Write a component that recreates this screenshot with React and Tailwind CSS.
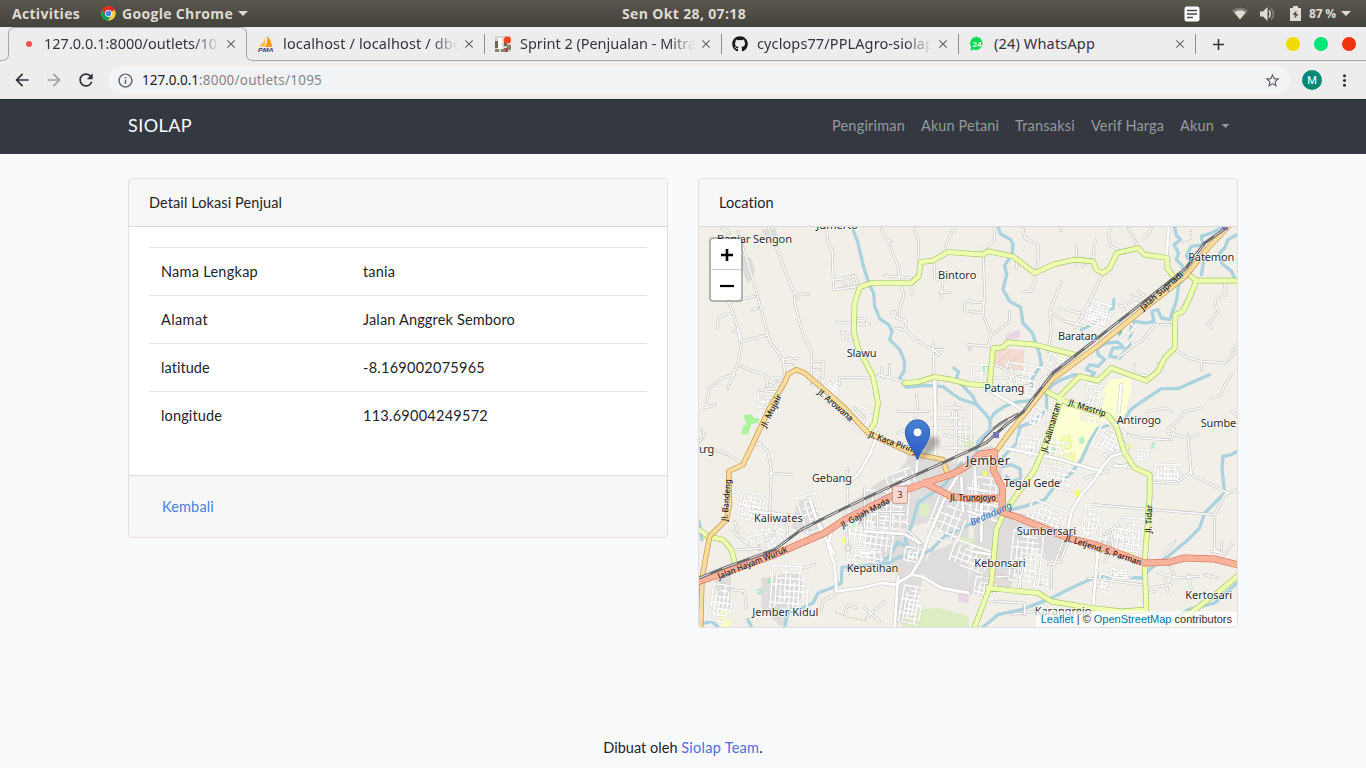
import { useLayoutEffect, useRef } from "react";
import { MdArrowBack, MdArrowForward, MdRefresh, MdInfoOutline, MdStarBorder, MdMoreVert, MdAdd, MdClose } from "react-icons/md";
import { FaGithub } from "react-icons/fa";

/* Inline text whose letter spacing is tuned so that it spans w pixels. */
function Fit({ w, children, className = "" }) {
  const ref = useRef(null);
  useLayoutEffect(() => {
    const el = ref.current;
    el.style.letterSpacing = "0px";
    const natural = el.getBoundingClientRect().width;
    const n = el.textContent.length;
    el.style.letterSpacing = `${(w - natural) / n}px`;
  }, [w, children]);
  return (
    <span ref={ref} className={`inline-block whitespace-pre ${className}`}>
      {children}
    </span>
  );
}

/* ---------- desktop top bar ---------- */
function ChromeLogo() {
  return (
    <svg className="h-[15px] w-[15px]" viewBox="0 0 48 48">
      <circle cx="24" cy="24" r="23" fill="#fdd043" />
      <path d="M24 24 L4 12.5 A23 23 0 0 1 44 12.5 Z" fill="#dd2c1e" />
      <path d="M24 24 L4 12.5 A23 23 0 0 0 22 47 L33 29 Z" fill="#109d58" />
      <path d="M24 13 H44.5 A23 23 0 0 0 4 12.5 L14 28 Z" fill="#dd2c1e" />
      <circle cx="24" cy="24" r="11" fill="#fff" />
      <circle cx="24" cy="24" r="8.8" fill="#4285f4" />
    </svg>
  );
}

function Caret({ className }) {
  return (
    <svg className={className} viewBox="0 0 10 5">
      <path d="M0 0H10L5 5Z" fill="currentColor" />
    </svg>
  );
}

function TopBar() {
  return (
    <div className="relative flex h-[27px] items-center bg-linear-to-b from-[#5a574e] to-[#43423c] pr-[15px] pl-3 font-['Open_Sans',sans-serif] text-[14px] font-bold text-[#dfdbd2]">
      <Fit w={68}>Activities</Fit>
      <div className="ml-[21px]"><ChromeLogo /></div>
      <Fit w={111} className="ml-[6px]">Google Chrome</Fit>
      <Caret className="ml-[5px] h-[5px] w-[10px]" />
      <div className="absolute inset-x-0 flex justify-center pb-px pl-[2px]"><Fit w={124}>Sen Okt 28, 07:18</Fit></div>
      <div className="ml-auto flex items-center">
        <svg className="h-4 w-4" viewBox="0 0 16 16">
          <rect x=".5" y=".5" width="15" height="15" rx="2.5" fill="#fff" />
          <path d="M3 4.5h10M3 8h10M3 11.5h6" stroke="#4b4942" strokeWidth="1.7" />
        </svg>
        <svg className="ml-[32px] h-[13px] w-4" viewBox="0 0 16 13">
          <path d="M0 3.5Q8-2.500 16 3.500L8 12.500Z" fill="#7d7b73" />
          <path d="M2.300 5.500Q8 1 13.700 5.500L8 12.500Z" fill="#dfdbd2" />
        </svg>
        <svg className="ml-[12px] h-[14px] w-[16px]" viewBox="0 0 16 14">
          <path d="M0 4.500H3L7.500 0V14L3 9.500H0Z" fill="#dfdbd2" />
          <path d="M9 3.500Q11.500 7 9 10.500" stroke="#dfdbd2" strokeWidth="1.500" fill="none" />
          <path d="M11 1.500Q16 7 11 12.500" stroke="#85837b" strokeWidth="1.500" fill="none" />
        </svg>
        <svg className="ml-[14px] h-[15px] w-[11px]" viewBox="0 0 11 15">
          <path d="M3 0H8V2H11V15H0V2H3Z" fill="#dfdbd2" />
          <path d="M6.500 4.500L2.500 9H5L4.500 12.500L8.500 8H6Z" fill="#4b4942" />
        </svg>
        <Fit w={27} className="ml-[8px] text-[12px]">87 %</Fit>
        <Caret className="ml-[5px] h-[5px] w-[10px]" />
      </div>
    </div>
  );
}

/* ---------- browser ---------- */
function PmaIcon() {
  return (
    <svg className="h-4 w-4" viewBox="0 0 16 16">
      <path d="M6 1Q7 6 2 11Q5 10 6.500 10.500Q8 6 6 1Z" fill="#f7b64a" />
      <path d="M9 0Q10 6 7 11H14Q14 5 9 0Z" fill="#f89c0e" />
      <path d="M1 11L4 6L4 11Z" fill="#f9c671" />
      <text x="0" y="15.600" textLength="15.500" lengthAdjust="spacingAndGlyphs" className="font-['Liberation_Sans',sans-serif] text-[5.500px] font-bold italic" fill="#3c3a78">PMA</text>
    </svg>
  );
}

function BoardIcon() {
  return (
    <svg className="h-4 w-4" viewBox="0 0 16 16">
      <rect width="16" height="16" fill="#d9d5cc" />
      <path d="M0 5h3v7H0zM9 6h3v4H9z" fill="#6f6a58" />
      <path d="M0 13h4v3H0zM6 12h4v4H6zM12 9h4v5h-4z" fill="#8b8468" />
      <path d="M10 12h3v4h-3z" fill="#c33a55" />
      <path d="M3 2h4v8l2 3H3z" fill="#fff" />
      <circle cx="12.300" cy="4" r="3.500" fill="#fb4223" />
    </svg>
  );
}

function WhatsAppIcon() {
  return (
    <svg className="h-4 w-4" viewBox="0 0 16 16">
      <path d="M8 .5A7 7 0 1 1 4.500 14L.8 15.200L2 11.500A7 7 0 0 1 8 .5Z" fill="#06d755" stroke="#fff" strokeWidth=".6" />
      <text x="8" y="10.800" textAnchor="middle" className="font-['Liberation_Sans',sans-serif] text-[8px] font-bold" fill="#fff">24</text>
    </svg>
  );
}

function Tab({ icon, title, w, fade = true, active = false }) {
  return (
    <div className="relative flex h-full w-[237px] shrink-0 items-center pl-[10px]">
      <div className="flex h-4 w-4 items-center justify-center">{icon}</div>
      <div className={`overflow-hidden pb-px ${active ? "ml-[7px] w-[176px]" : "ml-[9px] w-[175px]"} ${fade ? "mask-r-from-85% mask-r-to-100%" : ""}`}>
        <Fit w={w}>{title}</Fit>
      </div>
      <MdClose className="ml-[4px] h-[14px] w-[14px] text-[#5f6368]" />
      {!active && <div className="absolute top-[7px] right-0 h-5 w-px bg-[#8f8f8f]" />}
    </div>
  );
}

function TabStrip() {
  return (
    <div className="relative flex h-[34px] items-center bg-[#ededed] pl-[11px] font-['Noto_Sans',sans-serif] text-[14.500px] text-[#33343f]">
      <svg className="absolute inset-0 h-[34px] w-[1366px]" viewBox="0 0 1366 34">
        <path d="M0 33.500H2Q8.500 33.500 8.500 27V7Q8.500 .5 15 .5H240.500Q246.500 .5 246.500 7V27Q246.500 33.500 253 33.500H1366" fill="none" stroke="#a3a3a3" />
      </svg>
      <Tab icon={<div className="h-[6px] w-[6px] rounded-full bg-[#ff4d4d]" />} title="127.0.0.1:8000/outlets/10" w={173} active />
      <Tab icon={<PmaIcon />} title="localhost / localhost / dbc" w={177} />
      <Tab icon={<BoardIcon />} title="Sprint 2 (Penjualan - Mitra" w={176} />
      <Tab icon={<FaGithub className="h-4 w-4 text-[#16181c]" />} title="cyclops77/PPLAgro-siolap" w={177} />
      <Tab icon={<WhatsAppIcon />} title="(24) WhatsApp" w={101} fade={false} />
      <MdAdd className="ml-[13px] h-[19px] w-[19px] text-[#2e3436]" />
      <div className="ml-auto flex gap-[14px] pr-[10px]">
        <div className="h-[14px] w-[14px] rounded-full bg-[#f0dc00]" />
        <div className="h-[14px] w-[14px] rounded-full bg-[#00e676]" />
        <div className="h-[14px] w-[14px] rounded-full bg-[#f0330a]" />
      </div>
    </div>
  );
}

function Toolbar() {
  return (
    <div className="flex h-[38px] items-center bg-[#ededed] pl-[12px] font-['Noto_Sans',sans-serif] text-[13.500px]">
      <MdArrowBack className="h-5 w-5 text-[#2e3138]" />
      <MdArrowForward className="ml-3 h-5 w-5 text-[#a0a0a3]" />
      <MdRefresh className="ml-3 h-5 w-5 text-[#2e3138]" />
      <div className="ml-[12px] flex h-7 w-[1182px] items-center rounded-full bg-[#f1f3f4] pr-[9px] pl-[9px]">
        <MdInfoOutline className="h-[17px] w-[17px] text-[#5f6368]" />
        <Fit w={57} className="ml-2 text-[#202124]">127.0.0.1</Fit>
        <Fit w={123} className="text-[#85878c]">:8000/outlets/1095</Fit>
        <MdStarBorder className="ml-auto h-[17px] w-[17px] text-[#5f6368]" />
      </div>
      <div className="ml-[12px] flex h-5 w-5 items-center justify-center rounded-full bg-[#00897b] font-['Roboto',sans-serif] text-[11px] text-white">M</div>
      <MdMoreVert className="ml-[13px] h-[19px] w-[19px] text-[#33353b]" />
    </div>
  );
}

/* ---------- map: drawing units are a third of a pixel ---------- */
const rivers = [
  "M462 147L480 195L495 260L512 315L527 345L530 385L545 422L572 440L582 460L575 485L605 515L620 550L618 580L605 600L625 628L680 622L735 626L760 645L786 663L815 672L836 680L860 705L876 725L876 755L840 790L835 820",
  "M768 570L782 582L775 600L800 630L825 655L836 680",
  "M900 147L908 168L938 185L945 200L942 230L920 262L926 290L915 335L935 370L968 388L975 435L1003 465L1015 500L1025 530L1030 560L1010 590L1000 610L1005 635",
  "M1000 668L955 672L920 685L890 705L876 725",
  "M1430 147L1435 172L1448 185L1428 200L1442 225L1435 245L1452 262L1460 300L1442 320L1435 370L1415 425L1390 420L1380 395L1362 400L1368 430L1345 435L1310 430L1300 445L1295 500L1265 540L1235 535L1245 510L1275 508L1262 492L1225 495L1198 510L1200 530L1220 545L1200 565L1175 560L1165 575L1190 585L1175 600L1130 590L1090 605L1065 620L1045 640L1046 696L1010 730L966 746L956 796L916 836",
  "M1570 150L1540 165L1510 175L1515 200L1480 205L1465 232L1480 255L1450 290",
  "M1617 170L1590 185L1580 210L1565 225L1570 255L1600 280L1610 300",
  "M1480 240L1520 230L1510 290M1248 365L1245 390L1220 410L1200 430L1150 455",
  "M1535 590L1500 605L1440 632L1390 632L1355 655L1325 675L1298 695L1280 725L1245 738L1200 750L1175 790L1150 845L1120 885L1070 925L1040 965L980 985L940 995L870 1015L810 1042L740 1075L700 1115L660 1135L610 1135L570 1155L480 1165L432 1168L430 1215L400 1230L360 1245L345 1275L300 1295L270 1300L260 1347",
  "M790 855L770 880L740 920L696 950L660 975L640 1045L622 1085L630 1110L600 1092L570 1140L540 1150",
  "M1617 820L1600 830L1575 835L1572 875L1580 945L1550 975L1520 1005L1505 1050L1465 1090L1410 1135L1360 1170L1330 1200L1200 1195L1140 1220L1050 1265L970 1295L900 1310L855 1347",
  "M1617 1215L1550 1275L1470 1295L1420 1330",
  "M916 866L940 860L966 872L968 900L940 912L925 895",
  "M3 1030L12 1085M3 1340L40 1330L60 1347M150 1325L160 1347",
];

const minor = [
  "M210 147L240 220L265 290L290 345L290 375L315 470L340 520L340 590M288 345L332 350M300 352L300 362",
  "M386 155L390 195L402 215L407 335L485 325M407 307L470 293L480 320M430 303L445 322M455 297L462 318",
  "M70 150L95 165M120 160L175 340L215 490L255 545L262 600M92 372L170 355M92 372L105 405L132 490L118 560L90 630M132 490L210 470M57 450L62 418L100 405M107 460L120 455L125 490M118 560L155 575L205 595L208 620M25 675L35 630L70 600L110 590",
  "M550 155L575 200L600 265L605 310L618 350L605 390L605 420M650 150L662 190L662 250M770 147L745 195L740 225M560 293L640 300M642 320L642 350M570 185L580 190M708 248L710 300L735 310L730 360M725 343L755 343",
  "M415 432L515 440M480 420L505 423L508 440M430 462L465 468M435 465L435 480L460 487M580 405L590 400L595 420L625 430L620 455L590 450M620 455L660 490L705 515L725 530L705 540M705 500L708 590L715 675M712 515L735 515",
  "M250 545L300 540M255 560L285 560M205 625L250 605M185 637L240 630M195 660L230 660M205 600L250 600M340 550L375 550L375 600M340 575L365 575M365 600L365 620L340 620M162 395L180 390",
  "M888 147L890 185L855 215L860 340L855 410L880 470L870 500M810 370L860 375M815 400L850 405M935 400L935 430L890 465M800 400L800 375L812 365",
  "M975 150L980 180L1020 200L1020 250L1010 310L1000 340L975 342M1192 188L1185 240L1165 260M1135 205L1135 260M1240 147L1230 170L1240 205L1260 215M1340 180L1360 150M1290 150L1320 205M1155 240L1155 265M955 240L955 270M1085 147L1090 158",
  "M1215 285L1160 400L1130 450M1090 310L1055 400L1060 460L1050 520M1055 400L1100 430L1160 445M1085 390L1140 405L1160 400",
  "M1270 385L1340 350L1320 340M1300 350L1320 370M1265 380L1280 395M1500 302L1470 360L1450 390M1580 310L1582 350L1550 370L1560 400L1530 440L1540 450M1430 515L1470 540L1510 550L1580 555M1580 555L1617 520M1510 550L1510 575M1600 590L1580 620L1570 650L1540 660M1420 440L1370 440L1330 490L1310 500L1260 540",
  "M1310 560L1305 585L1350 595M1380 555L1395 565M890 560L940 580L950 610M930 545L945 590M870 600L930 600M1060 540L1080 570L1050 590M810 500L880 505M960 595L990 600M950 630L1000 620M1617 500L1600 520",
  "M425 620L425 598L520 600M540 590L560 595L620 612M550 570L555 600M575 560L575 600M715 600L712 840M640 750L812 750M690 760L690 840M740 770L812 790M770 675L760 730M700 720L790 720M600 765L640 750L650 720M730 690L790 690M775 700L775 850M730 810L812 810M600 700L690 700M655 650L660 690M470 690L500 720M455 700L480 740M440 720L470 735",
  "M175 790L210 820L220 880L215 1000M215 885L280 890M175 800L190 795M50 815L90 830L130 855M20 690L50 680M10 755L20 770L5 790",
  "M450 870L445 900L450 970L440 1010L450 1110M500 930L500 1060M535 940L540 1060M580 950L575 1060M620 1050L665 1090L660 1110M505 1060L620 1070M500 1000L620 1000",
  "M1300 870L1250 860L1220 830L1290 810L1260 770M1290 770L1330 780L1410 785M1410 750L1440 730L1460 700L1510 690M1410 765L1470 780L1480 890L1590 945M1600 700L1617 712M1500 770L1480 780L1470 770M1480 880L1440 910L1355 915M1617 935L1580 950L1550 1010L1550 1120M1550 1010L1360 995L1190 980M1340 730L1350 700L1400 690L1420 700M1420 785L1430 750",
  "M1430 1090L1380 1150M1410 1155L1430 1190L1420 1220L1350 1230M1470 1190L1480 1230M1550 1115L1580 1130L1600 1100M1380 1185L1440 1200L1500 1195M1570 1115L1570 1090M1240 1070L1245 1110L1220 1150M1220 1070L1260 1040M1400 1200L1410 1240M1370 1240L1350 1245M1520 1190L1560 1200M1540 1120L1570 1125",
  "M1100 1075L1080 1130L1060 1180L1060 1230M870 1160L960 1170L970 1245M860 1200L930 1195M980 1150L960 1230M1170 1200L1330 1220M890 1270L980 1275L980 1310M940 1310L1010 1300M1120 1070L1090 1140M1050 1160L1090 1150M1210 870L1290 860M1160 900L1230 880",
  "M370 1300L375 1270L415 1245M440 1310L450 1280L475 1290M500 1290L545 1330M505 1320L560 1270M100 1235L140 1240L145 1290M320 1170L350 1160M120 1115L200 1110M105 1060L150 1100M110 1030L120 1065M205 1090L230 1060M265 1030L270 1075",
];

const streets = [
  "M540 765L515 830L480 890L450 915",
  "M708 590L712 690L712 830",
  "M1412 147L1405 240",
  "M880 640L930 670L975 695",
  "M400 1060L390 1105L410 1160L415 1240L490 1230L550 1215L590 1220L640 1190L670 1195L730 1230L812 1245",
  "M658 840L655 890M780 890L740 960L690 1080L670 1140L640 1190M600 1195L590 1347",
  "M335 960L350 1010L375 1060M355 1030L410 1130",
  "M500 1060L620 1068L665 1095",
  "M920 810L1070 840L1210 880M1290 820L1240 835L1210 870L1190 905L1150 950L1120 1000L1110 1060",
  "M1270 620L1262 700M1200 1110L1185 1285M850 950L850 1090M810 930L870 940M790 900L795 1000M830 870L835 960",
  "M160 1000L300 1015M820 1120L880 1130M810 1000L900 1030",
];

const amber = [
  "M8 1347L12 1200L35 1075L85 1025L95 980L92 880L135 860L215 690L262 610L270 588L295 575L320 585L390 645L440 690L510 765L640 825L735 845L748 888",
  "M890 825L940 757L1008 672L1062 605L1200 503L1320 406L1462 295L1530 210L1590 147",
];

const lime = [
  "M512 762L530 735L540 675L525 595L480 510L467 460L470 375L485 328L520 315L640 315L662 295L668 252L705 248L750 222L855 230L870 220L945 235L1010 285L1070 258L1130 245L1185 250L1195 275L1215 285L1235 270L1257 225L1320 210L1340 230L1408 240L1408 270L1430 300",
  "M620 615L660 612L710 597L760 605L810 618L875 622L885 510L915 508L930 493L1010 500L1130 530",
  "M1460 280L1495 308L1617 308M1495 308L1470 370L1455 400L1432 410L1430 510L1400 540L1380 580L1345 608L1240 570L1200 608L1145 595L1085 655L1085 675L1040 805L1010 875L960 945L918 1005L895 1055L880 1215L830 1347",
  "M1035 635L1110 675L1230 712L1255 745L1280 825L1310 870L1355 890L1355 955L1340 1155L1345 1295L1270 1300L1180 1290L1060 1270L1020 1245L870 1230",
  "M1617 1195L1570 1235L1510 1280L1450 1325L1440 1347",
  "M3 1055L30 1075L75 1085L100 1115L112 1160",
];

const trunk = [
  "M3 1210L90 1180L230 1130L380 1065L440 1025L600 945L680 915L760 890L800 868L848 828L890 822L886 876L914 930L912 1003L950 1015L1110 1080L1190 1100L1260 1125L1340 1155L1410 1153L1460 1140L1550 1143L1617 1160",
  "M680 915L760 955L810 962L912 960",
];

const rail = "M1585 150L1520 195L1460 275L1320 385L1065 585L1005 662L975 702L925 740L866 793L810 820L600 915L440 990L310 1055L230 1115L90 1165L3 1200";

/* x, y, width, height, rotation, columns, rows of housing blocks */
const blocks = [
  [125, 945, 70, 80, 12, 7, 6], [175, 1030, 90, 60, 15, 5, 4], [220, 1165, 110, 130, 4, 8, 7], [40, 1220, 60, 110, 8, 5, 6],
  [150, 1065, 120, 60, -12, 6, 3], [310, 950, 60, 110, -18, 3, 6], [455, 1010, 130, 130, 8, 8, 6], [450, 1110, 100, 40, 6, 5, 3],
  [610, 1225, 60, 110, 10, 5, 8], [500, 940, 130, 110, 4, 6, 5], [700, 960, 100, 130, 22, 5, 5], [760, 1100, 110, 70, 20, 6, 4],
  [820, 900, 90, 120, 6, 5, 6], [770, 690, 50, 120, 0, 3, 5], [920, 560, 110, 90, 10, 6, 4], [1050, 520, 60, 60, 25, 4, 3],
  [1165, 375, 70, 70, 15, 7, 8], [1160, 620, 50, 110, 12, 4, 6], [1250, 430, 60, 60, 38, 4, 2], [1190, 745, 90, 90, 28, 6, 7],
  [1370, 860, 80, 55, 2, 8, 4], [1320, 815, 30, 30, 0, 3, 3], [1020, 790, 90, 60, 12, 5, 4], [1030, 870, 100, 60, 12, 6, 4],
  [990, 980, 110, 70, 20, 7, 4], [1160, 980, 40, 100, 5, 3, 7], [1250, 1020, 90, 120, 5, 5, 6], [940, 1060, 90, 150, 6, 6, 9],
  [1240, 1175, 60, 25, 5, 6, 3], [1200, 1190, 40, 50, 20, 3, 4], [1010, 1190, 50, 40, 10, 4, 3], [830, 1200, 60, 60, 10, 4, 4],
  [380, 610, 50, 40, 35, 6, 4], [180, 640, 60, 50, 5, 4, 3], [1190, 1050, 120, 60, 10, 7, 3], [570, 880, 80, 60, -20, 4, 3],
  [620, 1110, 50, 40, 10, 4, 3], [470, 690, 40, 70, 30, 4, 3], [960, 780, 60, 50, 10, 5, 4], [820, 560, 60, 50, 5, 2, 2],
  [1000, 690, 40, 50, 15, 3, 3],
];

function blockPath([x, y, w, h, , nx, ny]) {
  let d = "";
  for (let i = 0; i <= nx; i++) {
    const a = (i * 37) % 3 === 0 ? 0 : h * 0.18 * ((i * 7) % 3);
    d += `M${x + (w * i) / nx} ${y + a}V${y + h - (((i * 5) % 4) * h) / 16}`;
  }
  for (let j = 0; j <= ny; j++) {
    const a = ((j * 5) % 3) * w * 0.16;
    d += `M${x + a} ${y + (h * j) / ny}H${x + w - (((j * 3) % 4) * w) / 14}`;
  }
  return d;
}

const places = [
  ["Jumerto", 355, 153, 125], ["Banjar Sengon", 57, 195, 225], ["Bintoro", 720, 303, 115], ["Slawu", 446, 537, 90],
  ["Patemon", 1471, 248, 138], ["Baratan", 1080, 485, 118], ["Patrang", 859, 643, 120], ["ung", 3, 825, 46],
  ["Gebang", 342, 911, 120], ["Kaliwates", 168, 1031, 146], ["Kepatihan", 446, 1183, 155], ["Jember Kidul", 163, 1314, 198],
  ["Antirogo", 1256, 739, 133], ["Sumbe", 1508, 747, 107], ["Tegal Gede", 917, 926, 170], ["Sumbersari", 956, 1070, 178],
  ["Kebonsari", 829, 1167, 154], ["Kertosari", 1462, 1263, 140], ["Karangrejo", 1010, 1312, 170],
];

const roadNames = [
  ["Jl. Mujair", 203, 750, 108, -63], ["Jl. Arowana", 358, 646, 130, 41], ["Jl. Kaca Piring", 511, 776, 153, 20], ["Jl. Bandeng", 88, 1030, 126, -85],
  ["Jalan Hayam Wuruk", 64, 1204, 222, -22], ["Jl. Gajah Mada", 434, 1050, 162, -28], ["Jl. Trunojoyo", 757, 970, 137, 0], ["Jl. Letjend. S. Parman", 1101, 1087, 238, 18.5],
  ["Jl. Kalimantan", 1046, 824, 152, -74], ["Jl. Mastrip", 1111, 680, 115, 18], ["Jl. Tidar", 1360, 1065, 84, -88], ["Jalan Supriadi", 1336, 398, 160, -41],
];

function Roads({ paths, width, fill, casing, edge = 4 }) {
  const d = paths.join("");
  return (
    <g fill="none" strokeLinejoin="round" strokeLinecap="round">
      <path d={d} stroke={casing} strokeWidth={width + edge} />
      <path d={d} stroke={fill} strokeWidth={width} />
    </g>
  );
}

function MapDrawing() {
  return (
    <svg className="block h-[400px] w-[538px] bg-[#f2efe9]" viewBox="3 147 1614 1200">
      <g fill="#dedddc">
        <path d="M190 155L235 150L238 210L205 190ZM130 235L160 240L172 280L150 320L135 280Z" />
        <path d="M560 900L600 880L625 850L630 825L690 840L760 850L812 870L812 1110L760 1090L700 1030L620 1050L480 1040L450 980Z" />
        <path d="M800 830L880 800L915 850L905 1000L1000 1010L1130 1060L1090 1140L1050 1150L1000 1110L930 1240L810 1250L830 1040Z" />
        <path d="M500 1060L650 1070L690 1110L660 1280L590 1347L600 1190L520 1150Z" />
        <path d="M700 1120L812 1080L812 1240L720 1230L670 1180Z" />
        <path d="M300 970L340 960L380 1050L340 1075L280 1050Z" />
        <path d="M50 1190L100 1180L95 1330L60 1300ZM190 1200L310 1180L310 1260L250 1347L190 1290Z" />
        <path d="M810 500L822 500L820 520L810 520Z" />
        <path d="M1190 1090L1240 1080L1240 1130L1180 1120Z" />
      </g>
      <path d="M895 510L980 515L975 580L940 575L890 555Z" fill="#f5dcd3" />
      <path d="M900 555L940 515M925 565L975 520M955 575L978 550" stroke="#eebcb0" strokeWidth="2" />
      <path d="M925 470L965 455L965 480L920 488ZM780 1245L812 1245L812 1275L780 1272Z" fill="#ead6e6" />
      <path d="M1235 605L1295 598L1300 640L1280 712L1230 712L1180 690ZM1092 680L1260 730L1245 745L1200 752L1172 790L1145 850L1110 862L1045 830Z" fill="#feffd2" />
      <path d="M1060 800L1075 800L1080 825L1062 830ZM1090 780L1115 770L1120 810L1090 815ZM1085 830L1130 825L1125 855L1090 850Z" fill="#f5ffb0" stroke="#d5e88f" strokeWidth="2" />
      <path d="M1143 780L1158 775L1160 795L1145 800ZM1062 800L1078 805L1076 828L1060 825ZM1360 795L1372 790L1368 812L1358 812Z" fill="#b8f0cc" />
      <path d="M1253 452L1270 442L1283 462L1268 475L1258 470Z" fill="#8ccbac" />
      <path d="M137 712L158 708L168 720L185 722L180 735L160 738L150 770L130 768L135 745L145 740Z" fill="#a9f59c" />
      <path d="M610 1335L640 1295L720 1290L812 1315L812 1347H610ZM795 768L828 772L826 806L800 806ZM665 980L695 975L692 1020L665 1010ZM780 1075L830 1085L825 1100L790 1100Z" fill="#dcedc1" />
      <path d="M65 1300L100 1290L100 1340L70 1347ZM1085 528L1110 535L1090 552Z" fill="#fbffb8" />
      <path d="M180 1098L197 1098L197 1120L180 1120ZM870 1190L900 1185L895 1235L870 1240Z" fill="#f6cdc3" />
      <path d="M180 1235h10v12h-10zM210 1205h9v9h-9zM857 565h14v20h-12z" fill="none" stroke="#7deaa6" strokeWidth="3" />
      <path d="M1130 940l12-6 5 18-14 8zM432 1080h9v14h-9zM1290 800l8-4v16h-8zM855 880h12v14h-12zM1020 840h10v10h-10z" fill="#f6ff66" />

      <g fill="none" stroke="#aad3df" strokeWidth="10" strokeLinejoin="round" strokeLinecap="round">
        <path d={rivers.join("")} />
      </g>
      <path d="M1480 155L1478 185L1455 195M410 1302L460 1320L510 1330" fill="none" stroke="#cfae74" strokeWidth="2" strokeDasharray="8 5" />

      <g fill="none">
        {blocks.map((b, i) => (
          <g key={i} transform={`rotate(${b[4]} ${b[0] + b[2] / 2} ${b[1] + b[3] / 2})`}>
            <path d={blockPath(b)} stroke="#cbc9c6" strokeWidth="7" />
            <path d={blockPath(b)} stroke="#fff" strokeWidth="5" />
          </g>
        ))}
      </g>
      <Roads paths={minor} width={4.5} fill="#fff" casing="#c2c0bd" edge={3.5} />
      <Roads paths={streets} width={8.5} fill="#fff" casing="#c6c4c1" edge={3} />
      <circle cx="450" cy="1110" r="9" fill="#e8f5e8" stroke="#c9c7c4" strokeWidth="3" />
      <Roads paths={lime} width={13} fill="#eeffb0" casing="#a3c565" />
      <Roads paths={amber} width={12} fill="#fcdc9c" casing="#bd9645" />
      <Roads paths={trunk} width={17} fill="#fbb29a" casing="#dd7a62" />

      <path d="M885 752L928 724" fill="none" stroke="#999" strokeWidth="9" />
      <path d="M835 812L860 780L905 735L960 705" fill="none" stroke="#777" strokeWidth="4" />
      <path d={rail} fill="none" stroke="#6e6e6e" strokeWidth="9" strokeLinejoin="round" />
      <path d={rail} fill="none" stroke="#f4f4f4" strokeWidth="2.600" strokeDasharray="46 40" strokeLinejoin="round" />
      <path d="M1572 147H1590V156H1572ZM885 762H903V780H885Z" fill="#7b74b8" />

      <g className="font-['Noto_Sans',sans-serif]" fill="#2b2b2b" stroke="#ffffff" strokeOpacity=".75" strokeWidth="5" strokeLinejoin="round" paintOrder="stroke">
        {places.map(([t, x, y, w]) => (
          <text key={t} x={x} y={y} textLength={w} fontSize="33">{t}</text>
        ))}
        <text x="804" y="861" textLength="132" fontSize="38">Jember</text>
      </g>
      <g className="font-['Noto_Sans',sans-serif]" fill="#1c1c1c" fontSize="25.500" fontWeight="500">
        {roadNames.map(([t, x, y, w, r]) => (
          <text key={t} transform={`translate(${x} ${y}) rotate(${r})`} textLength={w} lengthAdjust="spacingAndGlyphs">{t}</text>
        ))}
        <text transform="translate(821 1044) rotate(-24)" textLength="135" fill="#4d7bc4" fontStyle="italic" fontSize="29">Bedadung</text>
      </g>
      <rect x="583" y="924" width="46" height="52" rx="5" fill="#f9d9d0" stroke="#c08f80" strokeWidth="2.500" />
      <text x="606" y="960" textAnchor="middle" className="font-['Noto_Sans',sans-serif]" fontSize="28" fill="#4b332c">3</text>

      <defs>
        <linearGradient id="pin" x1="0" y1="0" x2="0" y2="1">
          <stop offset="0" stopColor="#4484d2" />
          <stop offset="1" stopColor="#2f55c6" />
        </linearGradient>
        <filter id="soft"><feGaussianBlur stdDeviation="6" /></filter>
      </defs>
      <path d="M660 846L685 785Q705 765 725 785Q725 812 660 846Z" fill="#000" opacity=".28" filter="url(#soft)" />
      <path d="M658 846C650 815 622 795 622 762A36.500 36.500 0 0 1 695 762C695 795 668 815 658 846Z" fill="url(#pin)" stroke="#2e5fae" strokeWidth="3" />
      <circle cx="658.500" cy="763" r="13" fill="#fff" stroke="#2e5fae" strokeWidth="2" />
    </svg>
  );
}

/* ---------- page ---------- */
const links = [["Pengiriman", 73], ["Akun Petani", 78], ["Transaksi", 60], ["Verif Harga", 73]];

const rows = [
  ["Nama Lengkap", 97, "tania", 32],
  ["Alamat", 47, "Jalan Anggrek Semboro", 152],
  ["latitude", 49, "-8.169002075965", 122],
  ["longitude", 61, "113.69004249572", 125],
];

function Card({ title, w, children }) {
  return (
    <div className="flex w-[540px] flex-col overflow-hidden rounded-[4px] border border-[#dfdfdf] bg-white">
      <div className="flex h-12 items-center border-b border-[#d9d9d9] bg-[#f7f7f7] px-5 pb-px">
        <Fit w={w}>{title}</Fit>
      </div>
      {children}
    </div>
  );
}

export default function App() {
  return (
    <div className="flex h-[768px] w-[1366px] flex-col overflow-hidden bg-[#f8fafc] font-['Lato',sans-serif] text-[14.500px] leading-[23px] text-[#212529]">
      <TopBar />
      <TabStrip />
      <Toolbar />
      <nav className="flex h-[55px] shrink-0 items-center justify-between border-t border-[#2b2f36] bg-[#343841] px-32 pb-[3px]">
        <Fit w={64} className="text-[18px] text-white">SIOLAP</Fit>
        <div className="flex items-center gap-4 pr-2 text-[#96999d]">
          {links.map(([t, w]) => <Fit key={t} w={w}>{t}</Fit>)}
          <div className="flex items-center gap-[7px]">
            <Fit w={34}>Akun</Fit>
            <Caret className="h-[4px] w-[9px]" />
          </div>
        </div>
      </nav>
      <main className="flex items-start gap-[30px] px-32 pt-6">
        <Card title="Detail Lokasi Penjual" w={133}>
          <div className="h-[248px] p-5">
            {rows.map(([k, kw, v, vw]) => (
              <div key={k} className="flex h-12 items-center border-t border-[#dee2e6] pb-px pl-3">
                <div className="w-[202px]"><Fit w={kw}>{k}</Fit></div>
                <Fit w={vw}>{v}</Fit>
              </div>
            ))}
          </div>
          <div className="flex h-[62px] items-center border-t border-[#d9d9d9] bg-[#f7f7f7] pb-px pl-[33px]">
            <Fit w={52} className="text-[#4a7fe0]">Kembali</Fit>
          </div>
        </Card>
        <Card title="Location" w={55}>
          <div className="relative h-[400px]">
            <MapDrawing />
            <div className="absolute top-[10px] left-[10px] w-[34px] rounded-[4px] border-2 border-black/25 bg-white bg-clip-padding">
              <div className="flex h-[31px] items-center justify-center border-b border-[#ccc] pt-[2px] pl-[2px]">
                <svg className="h-3 w-3" viewBox="0 0 12 12"><path d="M6 0V12M0 6H12" stroke="#000" strokeWidth="2.600" /></svg>
              </div>
              <div className="flex h-[30px] items-center justify-center pt-px pl-px">
                <svg className="h-3 w-[14px]" viewBox="0 0 14 12"><path d="M0 6H14" stroke="#000" strokeWidth="2.200" /></svg>
              </div>
            </div>
            <div className="absolute right-0 bottom-0 flex h-4 items-center bg-white/70 px-[5px] font-['Liberation_Sans',Arial,sans-serif] text-[11px] whitespace-pre text-[#333]">
              <span className="text-[#0078a8]">Leaflet</span> | © <span className="text-[#0078a8]">OpenStreetMap</span> contributors
            </div>
          </div>
        </Card>
      </main>
      <footer className="mt-auto flex justify-center pb-[9px]">
        <Fit w={78}>{"Dibuat oleh "}</Fit>
        <Fit w={78} className="text-[#4b6fdc]">Siolap Team</Fit>
        <span>.</span>
      </footer>
    </div>
  );
}
